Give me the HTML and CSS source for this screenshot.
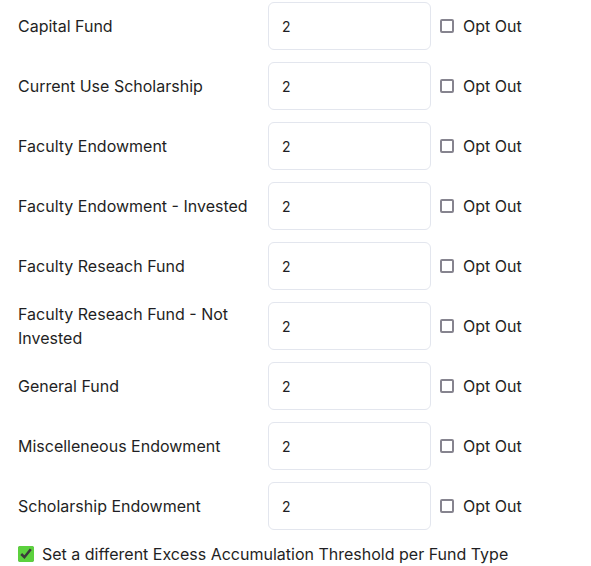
FILE: index.html
```html
<!DOCTYPE html>
<html>
<head>
<meta charset="utf-8">
<link rel="stylesheet" href="styles.css">
</head>
<body>
<div class="form">
  <div class="row"><div class="label">Capital Fund</div><input class="num" type="text" value="2"><label class="opt"><input type="checkbox" class="cb">Opt Out</label></div>
  <div class="row"><div class="label">Current Use Scholarship</div><input class="num" type="text" value="2"><label class="opt"><input type="checkbox" class="cb">Opt Out</label></div>
  <div class="row"><div class="label">Faculty Endowment</div><input class="num" type="text" value="2"><label class="opt"><input type="checkbox" class="cb">Opt Out</label></div>
  <div class="row"><div class="label">Faculty Endowment - Invested</div><input class="num" type="text" value="2"><label class="opt"><input type="checkbox" class="cb">Opt Out</label></div>
  <div class="row"><div class="label">Faculty Reseach Fund</div><input class="num" type="text" value="2"><label class="opt"><input type="checkbox" class="cb">Opt Out</label></div>
  <div class="row"><div class="label">Faculty Reseach Fund - Not Invested</div><input class="num" type="text" value="2"><label class="opt"><input type="checkbox" class="cb">Opt Out</label></div>
  <div class="row"><div class="label">General Fund</div><input class="num" type="text" value="2"><label class="opt"><input type="checkbox" class="cb">Opt Out</label></div>
  <div class="row"><div class="label">Miscelleneous Endowment</div><input class="num" type="text" value="2"><label class="opt"><input type="checkbox" class="cb">Opt Out</label></div>
  <div class="row"><div class="label">Scholarship Endowment</div><input class="num" type="text" value="2"><label class="opt"><input type="checkbox" class="cb">Opt Out</label></div>
  <label class="threshold"><input type="checkbox" class="cb-green" checked>Set a different Excess Accumulation Threshold per Fund Type</label>
</div>
</body>
</html>
```
FILE: styles.css
```css
html, body {
  margin: 0;
  padding: 0;
  background: #ffffff;
}
body {
  font-family: Inter, "Noto Sans", sans-serif;
  font-size: 16px;
  color: #1f1f24;
}
.form {
  padding: 2px 0 0 18px;
  display: flex;
  flex-direction: column;
  gap: 12px;
}
.row {
  display: flex;
  align-items: center;
  height: 48px;
}
.label {
  width: 236px;
  padding-right: 14px;
  line-height: 24px;
}
.num {
  box-sizing: border-box;
  width: 163px;
  height: 48px;
  border: 1px solid #e3e6ee;
  border-radius: 6px;
  padding: 0 13px;
  font-family: Inter, sans-serif;
  font-size: 14px;
  color: #1f1f24;
  outline: none;
  margin: 0;
}
.opt {
  display: flex;
  align-items: center;
  margin-left: 9px;
  gap: 9px;
}
.cb {
  -webkit-appearance: none;
  appearance: none;
  box-sizing: border-box;
  margin: 0;
  width: 14px;
  height: 14px;
  border: 2px solid #86848f;
  border-radius: 2px;
  background: #fff;
}
.threshold {
  display: flex;
  align-items: center;
  gap: 8px;
  margin-top: 0;
  line-height: 24px;
}
.cb-green {
  margin: 0;
  width: 16px;
  height: 16px;
  accent-color: #5cd13e;
}
```
